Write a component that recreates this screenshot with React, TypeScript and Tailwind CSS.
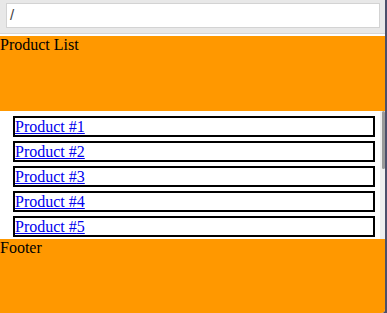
export default function App() {
  const products = [1, 2, 3, 4, 5];
  return (
    <div className="flex h-[313px] w-[387px] overflow-hidden bg-[#4b4f6b] font-['Liberation_Serif',serif] text-base text-black">
      <div className="flex w-[385px] flex-col overflow-hidden rounded-br-[4px] bg-white">
        <div className="h-[34px] border-b border-[#d6d6d6] bg-[#e8e8e8] px-[6px] pt-[3px]">
          <div className="flex h-[25px] w-[374px] items-center border border-[#d3d3d3] bg-white pl-[3px] font-['Liberation_Sans',sans-serif] text-[15px] font-light text-[#444]">
            /
          </div>
        </div>
        <div className="h-[2px] bg-white" />
        <div className="h-[75px] bg-[#ff9800] leading-[18px]">Product List</div>
        <div className="flex h-[128px]">
          <div className="flex flex-1 flex-col gap-[4px] pl-[13px] pr-[5px] pt-[5px]">
            {products.map((n) => (
              <div
                key={n}
                className="h-[21px] border-2 border-black leading-[17px]"
              >
                <a href="#" className="text-[#0000ee] underline">
                  Product #{n}
                </a>
              </div>
            ))}
          </div>
          <div className="w-[5px] bg-[#eeeeee]">
            <div className="ml-[2px] h-[58px] w-[3px] rounded-full bg-[#9a9a9a]" />
          </div>
        </div>
        <div className="flex-1 bg-[#ff9800] leading-[18px]">Footer</div>
      </div>
    </div>
  );
}
